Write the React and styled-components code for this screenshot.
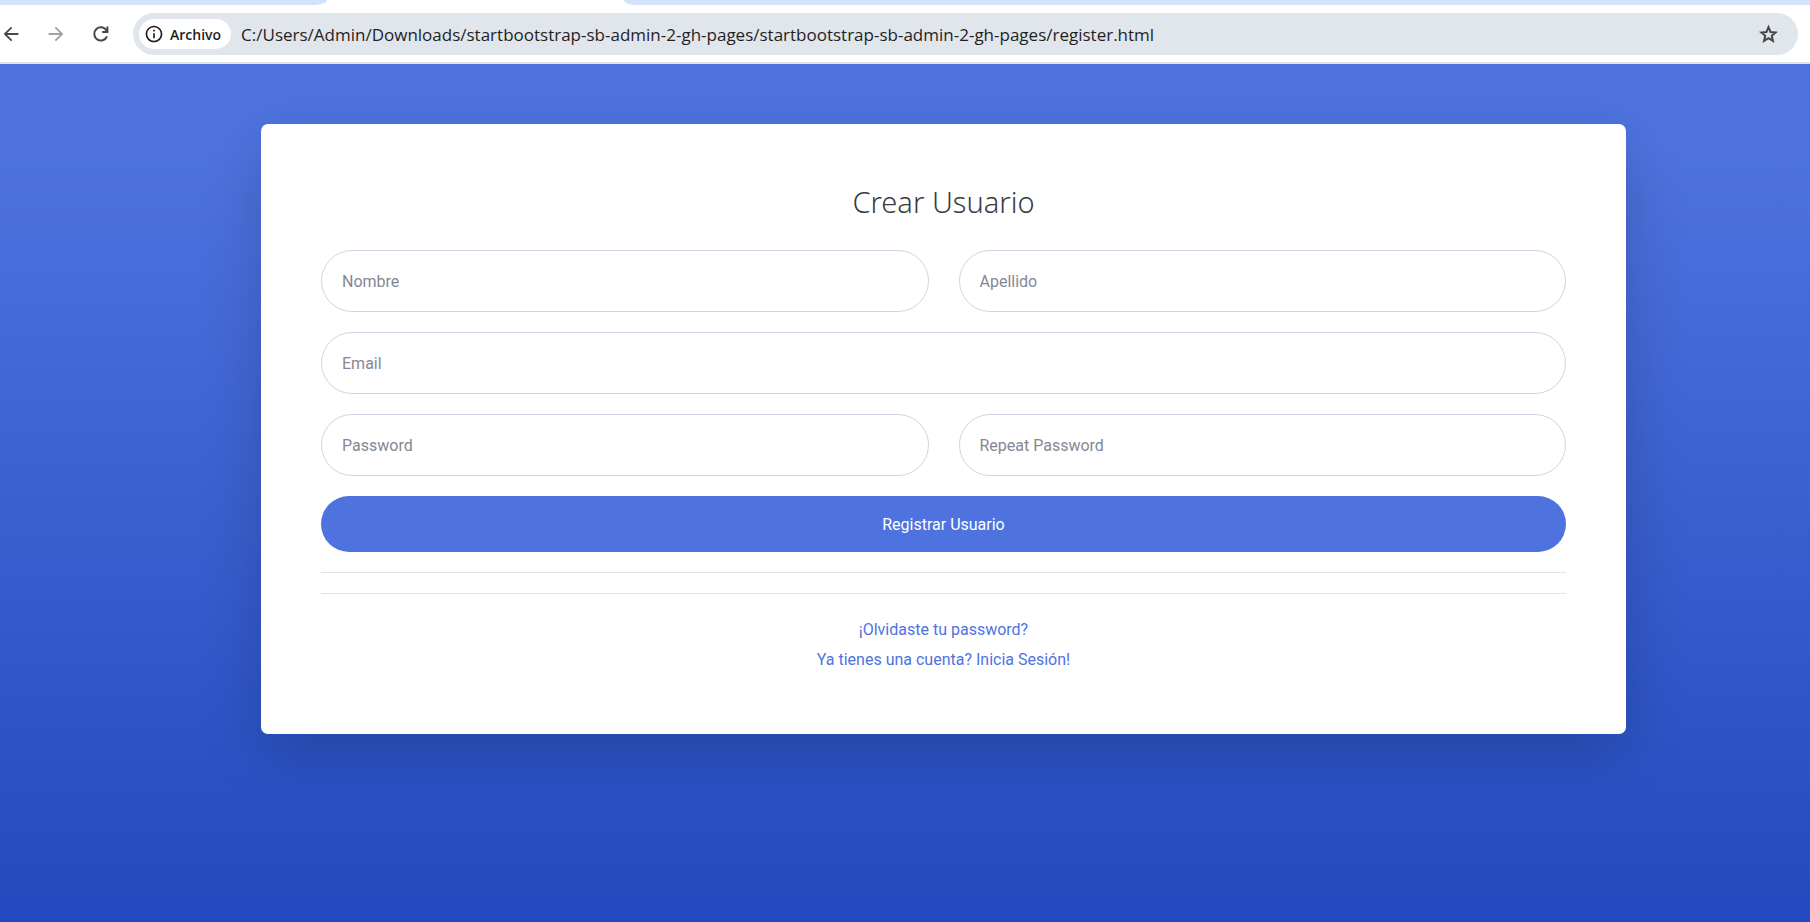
import React from 'react';
import styled, { createGlobalStyle } from 'styled-components';
import { MdArrowBack, MdArrowForward, MdInfoOutline } from 'react-icons/md';

const GlobalStyle = createGlobalStyle`
  *, *::before, *::after { box-sizing: border-box; }
  html, body, #root { height: 100%; }
  body {
    margin: 0;
    background: #fff;
    font-family: Roboto, Lato, sans-serif;
    font-size: 16px;
  }
`;

const Window = styled.div`
  display: flex;
  flex-direction: column;
  min-height: 100%;
`;

const TabStrip = styled.div`
  display: grid;
  grid-template-columns: 327px 297px 1fr;
  height: 5px;
  background: #fff;
`;

const TabEdge = styled.div`
  background: #d3e3fd;
  border-bottom-left-radius: ${({ $side }) => ($side === 'right' ? '12px 5px' : '0')};
  border-bottom-right-radius: ${({ $side }) => ($side === 'left' ? '12px 5px' : '0')};
`;

const Toolbar = styled.header`
  display: flex;
  align-items: center;
  gap: 21px;
  height: 59px;
  padding: 1px 12px 0 0;
  border-bottom: 2px solid #e1e3e1;
`;

const Navigation = styled.nav`
  display: flex;
  align-items: center;
  gap: 23px;
`;

const IconButton = styled.button`
  display: grid;
  place-items: center;
  padding: 0;
  border: 0;
  background: none;
  color: #474747;
  opacity: ${({ disabled }) => (disabled ? 0.5 : 1)};
`;

const AddressBar = styled.div`
  display: flex;
  flex: 1;
  align-items: center;
  gap: 10px;
  height: 42px;
  padding: 0 18px 0 6px;
  border-radius: 21px;
  background: #e1e5ec;
`;

const SchemeChip = styled.button`
  display: flex;
  align-items: center;
  gap: 6px;
  height: 30px;
  padding: 0 10px 0 5px;
  border: 0;
  border-radius: 15px;
  background: #fff;
  color: #1f1f1f;
  font: 600 14px 'Open Sans', sans-serif;
`;

const AddressInput = styled.input`
  flex: 1;
  min-width: 0;
  padding: 0;
  border: 0;
  outline: 0;
  background: none;
  color: #1f1f1f;
  font: 400 17px 'Open Sans', sans-serif;
`;

const Page = styled.main`
  flex: 1;
  padding: 60px 184px 60px 261px;
  background: linear-gradient(180deg, #4e73df 10%, #224abe 100%);
`;

const Card = styled.section`
  padding: 60px 60px 59px;
  border-radius: 7px;
  background: #fff;
  box-shadow: 0 20px 60px rgba(0, 0, 0, 0.175);
`;

const Title = styled.h1`
  margin: 0 0 30px;
  color: #3a3b45;
  font-family: 'Noto Sans', sans-serif;
  font-size: 29px;
  font-weight: 300;
  line-height: 36px;
  text-align: center;
`;

const Form = styled.form`
  display: grid;
  gap: 20px;
`;

const FieldRow = styled.div`
  display: grid;
  grid-auto-columns: minmax(0, 1fr);
  grid-auto-flow: column;
  gap: 30px;
`;

const Field = styled.input`
  width: 100%;
  height: 62px;
  padding: 0 20px;
  border: 1px solid #d1d3e2;
  border-radius: 31px;
  outline: 0;
  background: #fff;
  color: #6e707e;
  font: inherit;

  &::placeholder {
    color: #858796;
    opacity: 1;
  }
`;

const SubmitButton = styled.button`
  height: 56px;
  border: 0;
  border-radius: 28px;
  background: #4e73df;
  color: #fff;
  font: inherit;
`;

const Divider = styled.hr`
  width: 100%;
  height: 1px;
  margin: 0;
  border: 0;
  background: #e3e3e3;
`;

const Links = styled.div`
  display: flex;
  flex-direction: column;
  align-items: center;
  margin-top: 21px;
  line-height: 30px;
`;

const TextLink = styled.a`
  color: #4e73df;
  text-decoration: none;
`;

const FIELD_ROWS = [
  [
    { label: 'Nombre', type: 'text' },
    { label: 'Apellido', type: 'text' },
  ],
  [{ label: 'Email', type: 'email' }],
  [
    { label: 'Password', type: 'password' },
    { label: 'Repeat Password', type: 'password' },
  ],
];

function ReloadIcon() {
  return (
    <svg width="22" height="22" viewBox="0 0 22 22" fill="none" stroke="currentColor" strokeWidth="2" aria-hidden="true">
      <path d="M17 13.3A6.6 6.6 0 1 1 16.6 7.6L17.4 9" />
      <path d="M17.4 3.6V9H12.2" />
      <path d="M14.6 8.6L17.2 6V8.6Z" fill="currentColor" stroke="none" />
    </svg>
  );
}

function StarIcon() {
  return (
    <svg width="23" height="23" viewBox="0 0 24 24" fill="none" stroke="currentColor" strokeWidth="2.1" aria-hidden="true">
      <path d="M12 4.4L14.1 9.4L19.4 9.9L15.4 13.4L16.6 18.7L12 15.9L7.4 18.7L8.6 13.4L4.6 9.9L9.9 9.4Z" />
    </svg>
  );
}

function BrowserBar() {
  return (
    <>
      <TabStrip>
        <TabEdge $side="left" />
        <div />
        <TabEdge $side="right" />
      </TabStrip>
      <Toolbar>
        <Navigation>
          <IconButton aria-label="Atrás"><MdArrowBack size={22} /></IconButton>
          <IconButton aria-label="Adelante" disabled><MdArrowForward size={22} /></IconButton>
          <IconButton aria-label="Recargar"><ReloadIcon /></IconButton>
        </Navigation>
        <AddressBar>
          <SchemeChip><MdInfoOutline size={20} />Archivo</SchemeChip>
          <AddressInput
            aria-label="Dirección"
            defaultValue="C:/Users/Admin/Downloads/startbootstrap-sb-admin-2-gh-pages/startbootstrap-sb-admin-2-gh-pages/register.html"
          />
          <IconButton aria-label="Agregar a favoritos"><StarIcon /></IconButton>
        </AddressBar>
      </Toolbar>
    </>
  );
}

export default function App() {
  return (
    <Window>
      <GlobalStyle />
      <BrowserBar />
      <Page>
        <Card>
          <Title>Crear Usuario</Title>
          <Form onSubmit={(event) => event.preventDefault()}>
            {FIELD_ROWS.map((row) => (
              <FieldRow key={row[0].label}>
                {row.map(({ label, type }) => (
                  <Field key={label} type={type} placeholder={label} aria-label={label} />
                ))}
              </FieldRow>
            ))}
            <SubmitButton type="submit">Registrar Usuario</SubmitButton>
            <Divider />
            <Divider />
          </Form>
          <Links>
            <TextLink href="#password">¡Olvidaste tu password?</TextLink>
            <TextLink href="#login">Ya tienes una cuenta? Inicia Sesión!</TextLink>
          </Links>
        </Card>
      </Page>
    </Window>
  );
}
